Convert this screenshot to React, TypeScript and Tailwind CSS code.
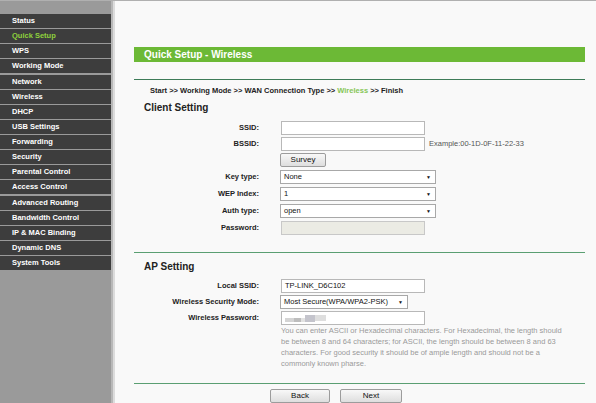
import React from "react";

const menu = [
  "Status",
  "Quick Setup",
  "WPS",
  "Working Mode",
  "Network",
  "Wireless",
  "DHCP",
  "USB Settings",
  "Forwarding",
  "Security",
  "Parental Control",
  "Access Control",
  "Advanced Routing",
  "Bandwidth Control",
  "IP & MAC Binding",
  "Dynamic DNS",
  "System Tools",
];

function Label({ children }: { children: React.ReactNode }) {
  return (
    <div className="w-[125px] shrink-0 text-right font-bold text-[7.5px] leading-[14px] text-[#222]">
      {children}
    </div>
  );
}

function TextInput({ value, disabled, children }: { value?: string; disabled?: boolean; children?: React.ReactNode }) {
  return (
    <div
      className={
        "ml-[22px] w-[144px] h-[14px] border flex items-center px-[3px] text-[7.5px] text-[#111] " +
        (disabled ? "bg-[#ebebe4] border-[#c8c8c8]" : "bg-white border-[#b8b8b8]")
      }
    >
      {value}
      {children}
    </div>
  );
}

function Select({ value, w }: { value: string; w: string }) {
  return (
    <div
      className={
        "ml-[21px] h-[14px] border border-[#a8a8a8] bg-white flex items-center justify-between pl-[3px] pr-[4px] text-[7.5px] text-[#111] " +
        w
      }
    >
      <span>{value}</span>
      <span className="text-[5px] leading-none">▼</span>
    </div>
  );
}

function Btn({ children, w }: { children: React.ReactNode; w: string }) {
  return (
    <div
      className={
        "h-[14px] border border-[#9c9c9c] rounded-[2px] bg-gradient-to-b from-[#f8f8f8] to-[#dedede] flex items-center justify-center text-[8px] text-[#111] " +
        w
      }
    >
      {children}
    </div>
  );
}

export default function App() {
  return (
    <div className="w-[596px] h-[403px] flex bg-[#f9f9f9] overflow-hidden border-t border-[#b0b0b0] font-['Liberation_Sans',Arial,sans-serif]">
      <aside className="w-[111px] shrink-0 bg-[#9a9a9a] pt-[13px] flex flex-col gap-[1.125px]">
        {menu.map((m) => (
          <div
            key={m}
            className={
              "h-[14px] bg-[#3d3d3d] pl-[12px] text-[7.5px] font-bold leading-[14px] " +
              (m === "Quick Setup" ? "text-[#8fd13c]" : "text-white")
            }
          >
            {m}
          </div>
        ))}
      </aside>
      <div className="w-[2px] shrink-0 bg-[#b8b8b8]" />
      <div className="w-[2px] shrink-0 bg-[#dcdcdc]" />
      <main className="flex-1 pl-[19px] pr-[11px] pt-[46px] text-[#222]">
        <div className="h-[15px] bg-[#6cb936] pl-[10px] text-white font-bold text-[10px] leading-[15px]">
          Quick Setup - Wireless
        </div>
        <div className="mt-[17px] h-[1px] bg-[#3d7b58]" />
        <div className="mt-[6px] pl-[16px] text-[7.5px] font-bold leading-[10px] text-[#222]">
          Start &gt;&gt; Working Mode &gt;&gt; WAN Connection Type &gt;&gt;{" "}
          <span className="text-[#86c656]">Wireless</span> &gt;&gt; Finish
        </div>
        <div className="mt-[6px] pl-[10px] text-[10px] font-bold leading-[12px]">Client Setting</div>

        <div className="mt-[7px] flex flex-col gap-[2px]">
          <div className="flex items-center">
            <Label>SSID:</Label>
            <TextInput />
          </div>
          <div className="flex items-center">
            <Label>BSSID:</Label>
            <TextInput />
            <span className="ml-[4px] text-[7.5px] text-[#555]">Example:00-1D-0F-11-22-33</span>
          </div>
          <div className="flex items-center">
            <div className="w-[125px] shrink-0" />
            <div className="ml-[21px]">
              <Btn w="w-[46px]">Survey</Btn>
            </div>
          </div>
          <div className="mt-[1px] flex items-center">
            <Label>Key type:</Label>
            <Select value="None" w="w-[156px]" />
          </div>
          <div className="mt-[1px] flex items-center">
            <Label>WEP Index:</Label>
            <Select value="1" w="w-[156px]" />
          </div>
          <div className="mt-[1px] flex items-center">
            <Label>Auth type:</Label>
            <Select value="open" w="w-[156px]" />
          </div>
          <div className="mt-[1px] flex items-center">
            <Label>Password:</Label>
            <TextInput disabled />
          </div>
        </div>

        <div className="mt-[17px] h-[1px] bg-[#5a9f72]" />
        <div className="mt-[8px] pl-[10px] text-[10px] font-bold leading-[12px]">AP Setting</div>

        <div className="mt-[6px] flex flex-col gap-[2px]">
          <div className="flex items-center">
            <Label>Local SSID:</Label>
            <TextInput value="TP-LINK_D6C102" />
          </div>
          <div className="flex items-center">
            <Label>Wireless Security Mode:</Label>
            <Select value="Most Secure(WPA/WPA2-PSK)" w="w-[128px]" />
          </div>
          <div className="flex items-center">
            <Label>Wireless Password:</Label>
            <TextInput>
              <div className="flex items-center blur-[0.6px]">
                <div className="w-[9px] h-[4px] mt-[3px] bg-[#d4d4d4]" />
                <div className="w-[7px] h-[4px] mt-[3px] bg-[#bdbdbd]" />
                <div className="w-[4px] h-[4px] mt-[3px] bg-[#e2e2e2]" />
                <div className="w-[10px] h-[7px] bg-[#c4c4cc]" />
                <div className="w-[11px] h-[6px] bg-[#dedede]" />
              </div>
            </TextInput>
          </div>
        </div>
        <div className="ml-[147px] w-[291px] text-[7.5px] leading-[11px] text-[#9a9a9a]">
          You can enter ASCII or Hexadecimal characters. For Hexadecimal, the length should be between 8 and 64
          characters; for ASCII, the length should be between 8 and 63 characters. For good security it should be
          of ample length and should not be a commonly known pharse.
        </div>

        <div className="mt-[14px] h-[1px] bg-[#5a9f72]" />
        <div className="mt-[5px] ml-[136px] flex gap-[10px]">
          <Btn w="w-[60px]">Back</Btn>
          <Btn w="w-[62px]">Next</Btn>
        </div>
      </main>
    </div>
  );
}
